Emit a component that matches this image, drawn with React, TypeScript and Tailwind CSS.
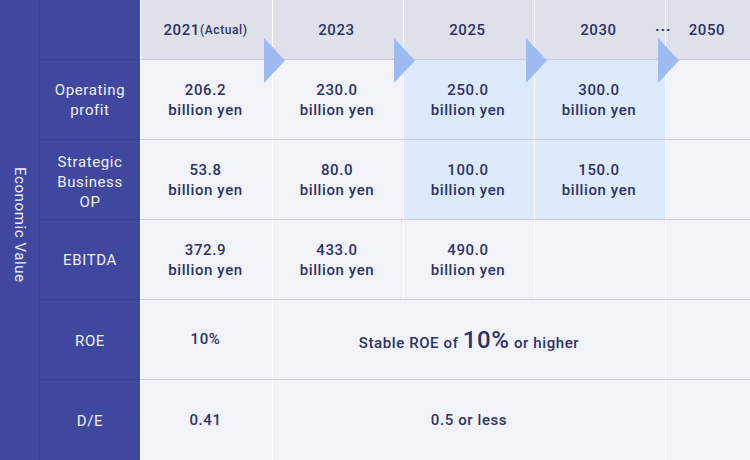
const yearCols = ["2023", "2025", "2030"];

const rows = [
  { label: ["Operating", "profit"], values: ["206.2", "230.0", "250.0", "300.0"] },
  { label: ["Strategic", "Business", "OP"], values: ["53.8", "80.0", "100.0", "150.0"] },
  { label: ["EBITDA"], values: ["372.9", "433.0", "490.0", ""] },
];

const arrows = [264, 394, 526, 658];

function Yen({ v }: { v: string }) {
  if (!v) return null;
  return (
    <div className="text-center text-[15px] font-medium leading-[20px] tracking-[0.6px] text-[#2c3267]">
      {v}
      <br />
      billion yen
    </div>
  );
}

export default function App() {
  return (
    <div className="relative flex h-[460px] w-[750px] overflow-hidden bg-[#f2f3f9] font-['Roboto',sans-serif]">
      {/* side heading */}
      <div className="flex h-full w-[40px] shrink-0 items-center justify-center border-r border-[#38409a] bg-[#3f479e] pb-[10px]">
        <span className="text-[15px] tracking-[0.6px] text-[#eef0fa] [writing-mode:vertical-rl]">
          Economic Value
        </span>
      </div>

      <div className="grid flex-1 grid-cols-[100px_132px_131px_131px_131px_1fr] grid-rows-[60px_80px_80px_80px_80px_80px]">
        {/* header */}
        <div className="border-b border-[#38409a] bg-[#3f479e]" />
        <div className="flex items-center justify-center border-b border-l border-b-[#cacbe0] border-l-white bg-[#dfe1ea] pt-[1px] pr-[2px] tracking-[0.6px] text-[#2c3267]">
          <span className="text-[15px] font-medium">2021</span>
          <span className="text-[12px] font-medium">(Actual)</span>
        </div>
        {yearCols.map((y) => (
          <div
            key={y}
            className="flex items-center justify-center border-b border-l border-b-[#cacbe0] border-l-white bg-[#dfe1ea] pt-[1px] pr-[3px] text-[15px] font-medium tracking-[0.6px] text-[#2c3267]"
          >
            {y}
          </div>
        ))}
        <div className="flex items-center justify-center border-b border-l border-b-[#cacbe0] border-l-white bg-[#dfe1ea] pt-[1px] pr-[2px] text-[15px] font-medium tracking-[0.6px] text-[#2c3267]">
          2050
        </div>

        {/* money rows */}
        {rows.map((r, ri) => (
          <div key={ri} className="contents">
            <div
              className={
                "flex items-center justify-center border-b border-[#38409a] bg-[#3f479e] text-center text-[15px] leading-[20px] tracking-[0.6px] text-[#eef0fa] " +
                (r.label.length > 2 ? "pt-[4px]" : "")
              }
            >
              <div>
                {r.label.map((l) => (
                  <div key={l}>{l}</div>
                ))}
              </div>
            </div>
            {r.values.map((v, ci) => (
              <div
                key={ci}
                className={
                  "flex items-center justify-center border-b border-l border-b-[#cacbe0] border-l-white pr-[2px] " +
                  (ri < 2 && ci >= 2 ? "bg-[#dde9fc]" : "bg-[#f2f3f9]")
                }
              >
                <Yen v={v} />
              </div>
            ))}
            <div className="border-b border-l border-b-[#cacbe0] border-l-white" />
          </div>
        ))}

        {/* ROE */}
        <div className="flex items-center justify-center border-b border-[#38409a] bg-[#3f479e] pt-[3px] text-[15px] tracking-[0.6px] text-[#eef0fa]">
          ROE
        </div>
        <div className="flex items-center justify-center border-b border-l border-b-[#cacbe0] border-l-white pr-[2px] text-[15px] font-medium tracking-[0.6px] text-[#2c3267]">
          10%
        </div>
        <div className="col-span-3 flex items-center justify-center border-b border-l border-b-[#cacbe0] border-l-white text-[15px] font-medium tracking-[0.6px] text-[#2c3267]">
          <span>
            Stable ROE of <span className="text-[24px]">10%</span> or higher
          </span>
        </div>
        <div className="border-b border-l border-b-[#cacbe0] border-l-white" />

        {/* D/E */}
        <div className="flex items-center justify-center bg-[#3f479e] pt-[3px] text-[15px] tracking-[0.6px] text-[#eef0fa]">
          D/E
        </div>
        <div className="flex items-center justify-center border-l border-l-white pr-[2px] text-[15px] font-medium tracking-[0.6px] text-[#2c3267]">
          0.41
        </div>
        <div className="col-span-3 flex items-center justify-center border-l border-l-white text-[15px] font-medium tracking-[0.6px] text-[#2c3267]">
          0.5 or less
        </div>
        <div className="border-l border-l-white" />
      </div>

      {/* arrows */}
      {arrows.map((x) => (
        <svg
          key={x}
          className="absolute top-[38px]"
          style={{ left: x }}
          width="21"
          height="45"
          viewBox="0 0 21 45"
        >
          <polygon points="0,0 21,22.5 0,45" fill="#9ebbf1" />
        </svg>
      ))}
      <span className="absolute left-[655px] top-[19px] text-[15px] font-bold tracking-[1px] text-[#2c3267]">
        ···
      </span>
    </div>
  );
}
